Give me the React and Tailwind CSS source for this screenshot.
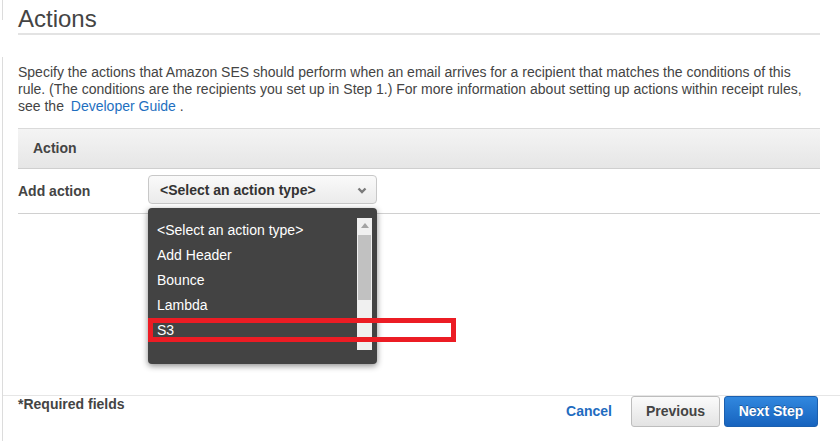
import React from 'react';

const options = ['<Select an action type>', 'Add Header', 'Bounce', 'Lambda', 'S3'];

// Chevron drawn inside the closed select
const Chevron = () => (
  <svg width="10" height="7" viewBox="0 0 10 7">
    <polyline points="1.5,1.5 5,5 8.5,1.5" fill="none" stroke="#7a7a7a" strokeWidth="2.4" />
  </svg>
);

// Open list for the action type, with its scrollbar and the red annotation box
const ActionMenu = () => (
  <div className="absolute left-0 top-[33px] z-10 w-[229px] h-[156px] rounded-[4px] bg-[#434343] shadow-[0_2px_6px_rgba(0,0,0,0.45)]">
    <ul className="pt-[10px] pl-[9px]">
      {options.map((o) => (
        <li key={o} className="h-[25px] leading-[25px] text-[14px] text-white whitespace-nowrap">
          {o}
        </li>
      ))}
    </ul>
    <div className="absolute right-[5px] top-[10px] w-[15px] h-[132px] bg-[#f0f0f0]">
      <div className="flex justify-center pt-[5px]">
        <svg width="8" height="5" viewBox="0 0 8 5">
          <polygon points="0,5 4,0 8,5" fill="#a3a3a3" />
        </svg>
      </div>
      <div className="mx-[1px] mt-[7px] h-[65px] bg-[#c1c1c1]" />
    </div>
    <div className="absolute left-0 top-[110px] w-[308px] h-[24px] border-[5px] border-solid border-[#ec1c24]" />
  </div>
);

export default function App() {
  return (
    <div className="w-[840px] h-[441px] overflow-hidden bg-white text-[#444] font-['Liberation_Sans',Arial,sans-serif]">
      {/* Title */}
      <div className="flex h-[57px]">
        <div className="ml-[2px] w-px h-[20px] bg-[#dcdcdc]" />
        <div className="ml-[15px] w-[802px]">
          <h1 className="pt-[5px] text-[24px] leading-[28px] border-b-2 border-[#e3e3e3]">Actions</h1>
        </div>
      </div>

      <div className="ml-[2px] h-[384px] flex flex-col border-l border-[#dcdcdc]">
        <div className="flex-1 pl-[15px] w-[817px]">
          <p className="pt-[7px] text-[14px] leading-[17px]">
            Specify the actions that Amazon SES should perform when an email arrives for a recipient that matches the conditions of this
            <br />
            rule. (The conditions are the recipients you set up in Step 1.) For more information about setting up actions within receipt rules,
            <br />
            see the <a className="ml-[3px] text-[#1e6fc0]">Developer Guide</a> .
          </p>

          {/* Table header */}
          <div className="mt-[13px] h-[41px] flex items-center pl-[15px] border-t border-b border-t-[#dadada] border-b-[#cfcfcf] bg-gradient-to-b from-[#f4f4f4] to-[#e6e6e6]">
            <span className="text-[14px] font-bold">Action</span>
          </div>

          {/* Add action row */}
          <div className="flex items-center pt-[6px] pb-[9px] border-b border-[#d0d0d0]">
            <span className="w-[130px] pt-[4px] text-[14px] font-bold">Add action</span>
            <div className="relative w-[229px] h-[29px]">
              <div className="h-full flex items-center justify-between pl-[11px] pr-[9px] pt-[2px] rounded-[4px] border border-[#c8c8c8] bg-gradient-to-b from-[#fafafa] to-[#ebebeb]">
                <span className="text-[14px] font-bold text-[#333]">&lt;Select an action type&gt;</span>
                <Chevron />
              </div>
              <ActionMenu />
            </div>
          </div>
        </div>

        {/* Footer */}
        <div className="h-[46px] flex justify-between items-start border-t border-[#e6e6e6] pl-[15px] pr-[22px]">
          <span className="text-[14px] leading-[17px] font-bold">*Required fields</span>
          <div className="flex items-center">
            <a className="mr-[19px] text-[14px] font-bold text-[#1f6cc0]">Cancel</a>
            <button className="w-[89px] h-[31px] rounded-[3px] border border-[#bdbdbd] bg-gradient-to-b from-[#fbfbfb] to-[#e3e3e3] text-[14px] font-bold text-[#444]">
              Previous
            </button>
            <button className="ml-[4px] w-[94px] h-[31px] rounded-[3px] border border-[#1b5fae] bg-gradient-to-b from-[#3188df] to-[#1763be] text-[14px] font-bold text-white [text-shadow:0_-1px_0_rgba(0,0,0,0.3)]">
              Next Step
            </button>
          </div>
        </div>
      </div>
    </div>
  );
}
